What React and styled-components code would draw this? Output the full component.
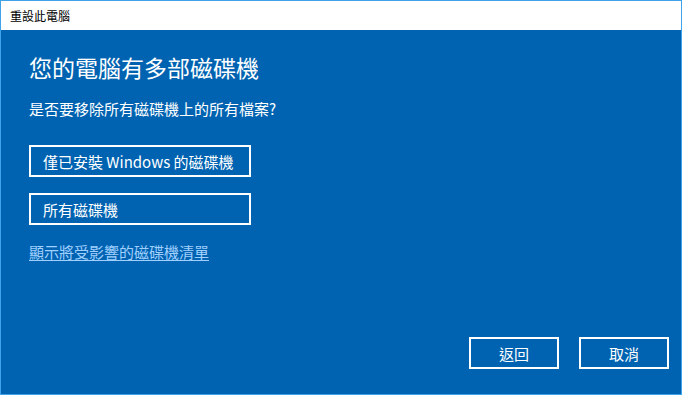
import React from "react";
import styled, { createGlobalStyle } from "styled-components";

const GlobalStyle = createGlobalStyle`
  html, body { margin: 0; padding: 0; background: #ffffff; }
  body { font-family: "Noto Sans CJK TC", "Noto Sans", sans-serif; }
  * { box-sizing: border-box; }
`;

const Window = styled.div`
  width: 682px;
  height: 395px;
  border: 1px solid #3fa3ea;
  display: flex;
  flex-direction: column;
  overflow: hidden;
`;

const TitleBar = styled.div`
  height: 29px;
  flex: none;
  background: #ffffff;
  display: flex;
  align-items: center;
  padding-left: 9px;
  font-size: 12px;
  color: #000000;
  line-height: 1;
`;

const Body = styled.div`
  flex: 1;
  background: #0063b1;
  display: flex;
  flex-direction: column;
  padding: 26px 12px 25px 28px;
  color: #ffffff;
`;

const Heading = styled.h1`
  margin: 0;
  font-size: 23px;
  font-weight: 400;
  line-height: 23px;
  height: 23px;
`;

const Question = styled.p`
  margin: 22px 0 0 0;
  font-size: 15px;
  line-height: 15px;
  height: 15px;
`;

const Options = styled.div`
  display: flex;
  flex-direction: column;
  gap: 16px;
  margin-top: 29px;
  align-items: flex-start;
`;

const OptionButton = styled.button`
  width: 222px;
  height: 32px;
  border: 2px solid #ffffff;
  background: transparent;
  color: #ffffff;
  font-family: inherit;
  font-size: 15px;
  line-height: 1;
  text-align: left;
  padding: 0 0 0 12px;
  margin: 0;
`;

const Link = styled.a`
  margin-top: 19px;
  align-self: flex-start;
  font-size: 15px;
  line-height: 15px;
  color: #a0d0ff;
  text-decoration: underline;
  text-underline-offset: 2px;
`;

const Footer = styled.div`
  margin-top: auto;
  display: flex;
  justify-content: flex-end;
  gap: 20px;
`;

const FooterButton = styled.button`
  width: 90px;
  height: 32px;
  border: 2px solid #ffffff;
  background: transparent;
  color: #ffffff;
  font-family: inherit;
  font-size: 15px;
  line-height: 1;
  padding: 0;
  margin: 0;
  text-align: center;
`;

export default function App() {
  return (
    <>
      <GlobalStyle />
      <Window>
        <TitleBar>重設此電腦</TitleBar>
        <Body>
          <Heading>您的電腦有多部磁碟機</Heading>
          <Question>是否要移除所有磁碟機上的所有檔案?</Question>
          <Options>
            <OptionButton>僅已安裝 Windows 的磁碟機</OptionButton>
            <OptionButton>所有磁碟機</OptionButton>
          </Options>
          <Link href="#">顯示將受影響的磁碟機清單</Link>
          <Footer>
            <FooterButton>返回</FooterButton>
            <FooterButton>取消</FooterButton>
          </Footer>
        </Body>
      </Window>
    </>
  );
}
